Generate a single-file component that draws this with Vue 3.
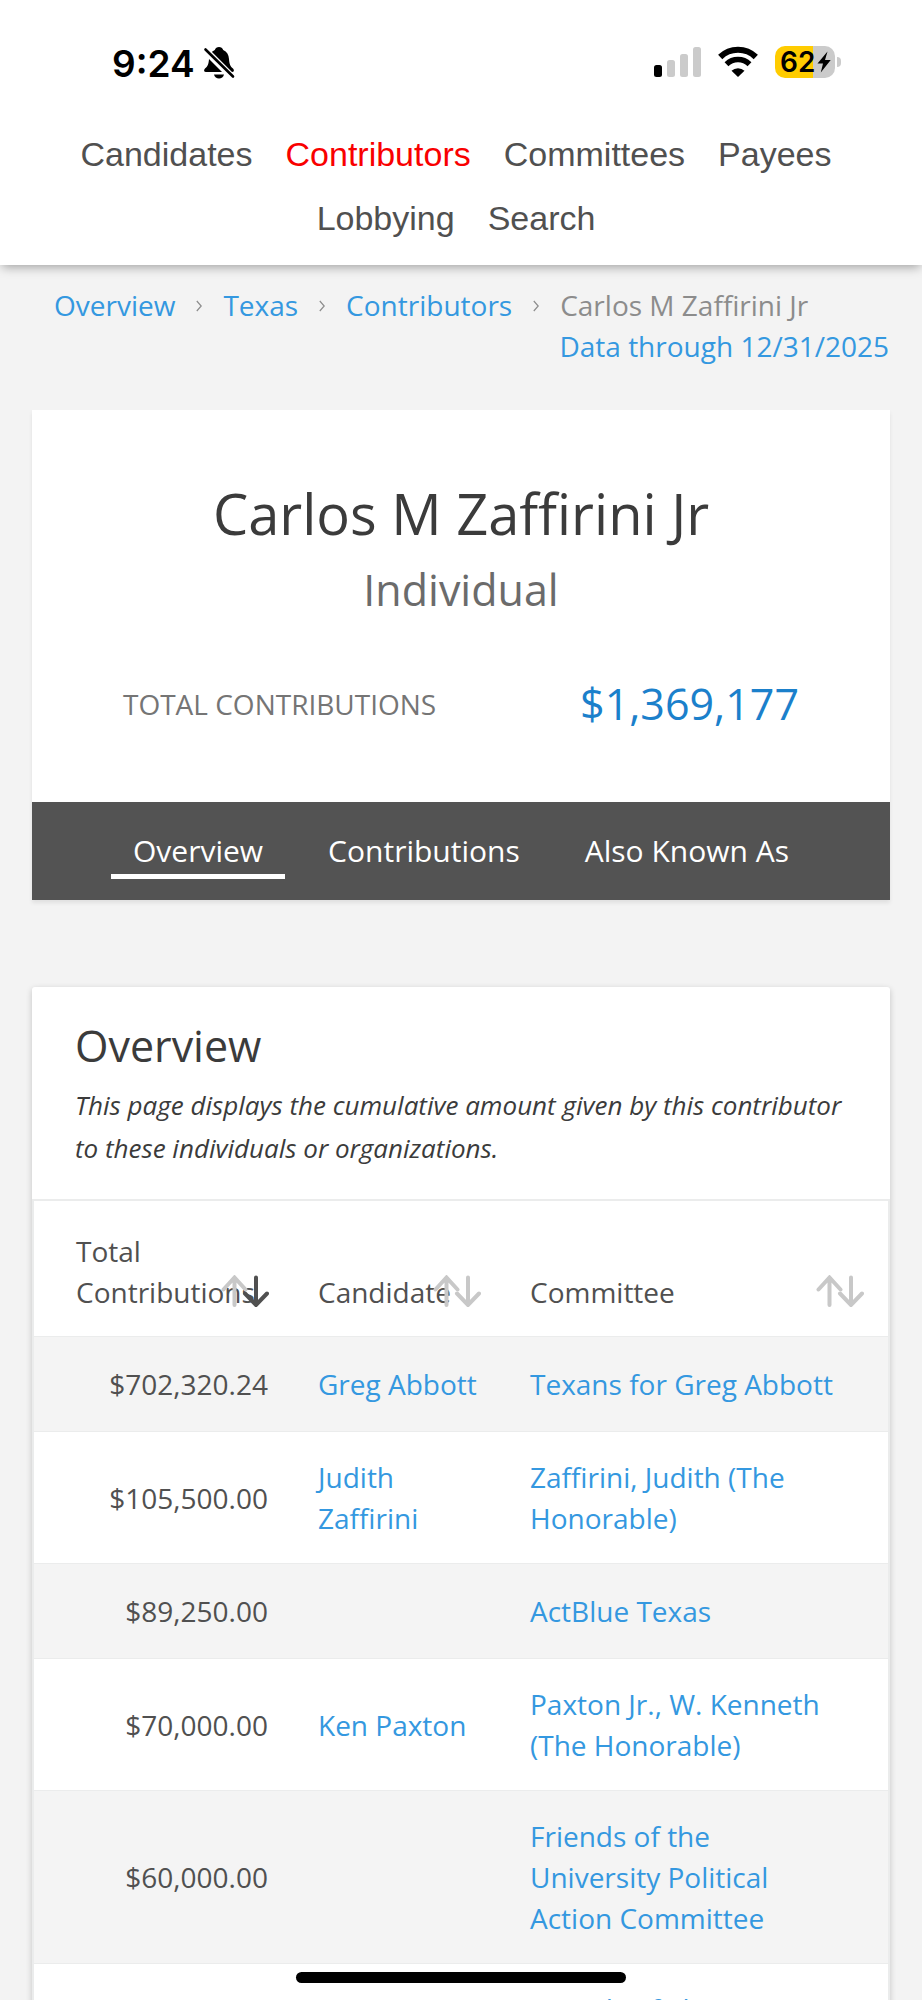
<script setup>
const navItems = [
  { label: 'Candidates' },
  { label: 'Contributors', active: true },
  { label: 'Committees' },
  { label: 'Payees' },
  { label: 'Lobbying' },
  { label: 'Search' }
]
const crumbs = ['Overview', 'Texas', 'Contributors']
const tabs = ['Overview', 'Contributions', 'Also Known As']
const columns = [
  { label: 'Total Contributions', sorted: true },
  { label: 'Candidate' },
  { label: 'Committee' }
]
const rows = [
  { amount: '$702,320.24', candidate: 'Greg Abbott', committee: 'Texans for Greg Abbott' },
  { amount: '$105,500.00', candidate: 'Judith Zaffirini', committee: 'Zaffirini, Judith (The Honorable)' },
  { amount: '$89,250.00', candidate: '', committee: 'ActBlue Texas' },
  { amount: '$70,000.00', candidate: 'Ken Paxton', committee: 'Paxton Jr., W. Kenneth (The Honorable)' },
  { amount: '$60,000.00', candidate: '', committee: 'Friends of the University Political Action Committee' },
  { amount: '', candidate: '', committee: 'Friends of The University' }
]
</script>

<template>
  <div class="screen">
    <header class="top">
      <div class="status">
        <div class="status-left">
          <span class="time">9:24</span>
          <svg class="bell" viewBox="0 0 32 34" width="32" height="34" aria-hidden="true">
            <path d="M16 1c-2 0-3.600 1.200-4.200 3C8 5.600 6.300 8.800 6 13c-.3 5-1.500 7.500-4 9.500C.5 24 .8 26 3 26h26c2.200 0 2.500-2 1-3.500-2.500-2-3.700-4.500-4-9.500-.3-4.200-2-7.400-5.800-9C19.600 2.200 18 1 16 1z" />
            <path d="M11 28.500h10c-.6 2.600-2.600 4-5 4s-4.400-1.400-5-4z" />
            <path d="M1 3l29 29" stroke="#fff" stroke-width="7" />
            <path d="M2.500 3.500L30 30.500" stroke="#000" stroke-width="2.600" stroke-linecap="round" />
          </svg>
        </div>
        <div class="status-right">
          <svg class="signal" viewBox="0 0 48 32" width="48" height="32" aria-hidden="true">
            <rect x="0" y="19" width="8" height="12" rx="2.500" />
            <rect x="13" y="14" width="8" height="17" rx="2.500" fill="#cbcbcb" />
            <rect x="26" y="8" width="8" height="23" rx="2.500" fill="#cbcbcb" />
            <rect x="39" y="1" width="8" height="30" rx="2.500" fill="#cbcbcb" />
          </svg>
          <svg class="wifi" viewBox="0 0 42 32" width="42" height="32" aria-hidden="true">
            <path d="M3.200 11a25.500 25.500 0 0 1 35.600 0" fill="none" stroke="#000" stroke-width="6" />
            <path d="M9.500 18.200a16.500 16.500 0 0 1 23 0" fill="none" stroke="#000" stroke-width="5.500" />
            <path d="M14.500 24.800a9.500 9.500 0 0 1 13 0L21 31z" />
          </svg>
          <div class="battery">
            <div class="cell">
              <span>62</span>
              <svg viewBox="0 0 14 22" width="14" height="22" aria-hidden="true">
                <path d="M10.500 .5L.5 12.500h5.500L3.800 21.500 13.700 9H8z" />
              </svg>
            </div>
            <div class="nub"></div>
          </div>
        </div>
      </div>
      <nav class="nav" aria-label="Main">
        <a v-for="n in navItems" :key="n.label" href="#" :class="{ active: n.active }">{{ n.label }}</a>
      </nav>
    </header>

    <div class="trail">
      <nav class="crumbs" aria-label="Breadcrumb">
        <template v-for="c in crumbs" :key="c">
          <a href="#">{{ c }}</a>
          <svg viewBox="0 0 6 12" width="6" height="12" aria-hidden="true">
            <path d="M.8 1L5.200 6 .8 11" fill="none" stroke="#8c8c8c" stroke-width="1.200" />
          </svg>
        </template>
        <span>Carlos M Zaffirini Jr</span>
      </nav>
      <a class="through" href="#">Data through 12/31/2025</a>
    </div>

    <main>
      <section class="profile">
        <div class="profile-body">
          <h1>Carlos M Zaffirini Jr</h1>
          <p class="kind">Individual</p>
          <dl class="total">
            <dt>TOTAL CONTRIBUTIONS</dt>
            <dd>$1,369,177</dd>
          </dl>
        </div>
        <nav class="tabs" aria-label="Contributor">
          <a v-for="(t, i) in tabs" :key="t" href="#" :class="{ active: i === 0 }">{{ t }}</a>
        </nav>
      </section>

      <section class="overview">
        <div class="intro">
          <h2>Overview</h2>
          <p>This page displays the cumulative amount given by this contributor to these individuals or organizations.</p>
        </div>
        <table>
          <colgroup>
            <col class="col-amount" />
            <col class="col-candidate" />
            <col />
          </colgroup>
          <thead>
            <tr>
              <th v-for="c in columns" :key="c.label" scope="col">
                <button type="button">
                  {{ c.label }}
                  <svg viewBox="0 0 48 32" width="48" height="32" aria-hidden="true">
                    <path class="arrow" d="M13.500 30V3M2.500 14.500L13.500 2.500 24.500 14.500" />
                    <path class="arrow" :class="{ on: c.sorted }" d="M35 2.500v27M24 18.500L35 30l11-11.500" />
                  </svg>
                </button>
              </th>
            </tr>
          </thead>
          <tbody>
            <tr v-for="(r, i) in rows" :key="i">
              <td class="amount">{{ r.amount }}</td>
              <td><a v-if="r.candidate" href="#">{{ r.candidate }}</a></td>
              <td class="committee"><a href="#">{{ r.committee }}</a></td>
            </tr>
          </tbody>
        </table>
      </section>
    </main>
    <div class="home"></div>
  </div>
</template>

<style>
body {
  margin: 0;
  background: #f3f3f3;
}
</style>

<style scoped>
.screen {
  position: relative;
  height: 100vh;
  overflow: hidden;
  background: #f3f3f3;
  font-family: "Open Sans", "Noto Sans", sans-serif;
  font-size: 28px;
  line-height: 41px;
  color: #505050;
}
a {
  color: #3498e0;
  text-decoration: none;
}
h1, h2, p, dl, dd {
  margin: 0;
  font-weight: 400;
}
.top {
  background: #fff;
  box-shadow: 0 4px 10px -2px rgba(0, 0, 0, 0.35);
  padding-bottom: 15px;
}
.status {
  display: flex;
  justify-content: space-between;
  align-items: center;
  height: 76px;
  padding: 24px 81px 22px 112px;
  font-family: Inter, sans-serif;
  color: #000;
}
.status-left, .status-right, .battery, .cell {
  display: flex;
  align-items: center;
}
.status-left {
  padding-top: 2px;
}
.time {
  font-size: 37px;
  font-weight: 600;
}
.bell {
  margin-left: 8px;
}
.wifi {
  margin: 0 16px 0 15px;
}
.cell {
  box-sizing: border-box;
  width: 60px;
  height: 32px;
  padding-left: 5px;
  border-radius: 10px;
  background: linear-gradient(to right, #ffcc00 38px, #cbcbcb 38px);
  font-size: 28px;
  font-weight: 600;
}
.cell svg {
  flex: none;
  margin-left: 2px;
}
.nub {
  width: 4px;
  height: 10px;
  margin-left: 2px;
  border-radius: 0 5px 5px 0;
  background: #cbcbcb;
}
.nav {
  display: flex;
  flex-wrap: wrap;
  justify-content: center;
  column-gap: 33px;
  padding: 0 70px 0 60px;
  font-family: "Liberation Sans", Arial, sans-serif;
  font-size: 34px;
  line-height: 64px;
}
.nav a {
  color: #505050;
}
.nav a.active {
  color: #f90000;
}
.trail {
  display: flex;
  flex-direction: column;
  padding: 20px 33px 43px 54px;
}
.crumbs {
  display: flex;
  align-items: center;
  gap: 21px;
  color: #8c8c8c;
}
.through {
  align-self: flex-end;
}
main {
  padding: 0 32px;
}
.profile {
  margin-bottom: 87px;
  box-shadow: 0 3px 4px rgba(0, 0, 0, 0.08);
}
.profile-body {
  padding: 65px 91px 69px;
  background: #fff;
  text-align: center;
}
h1 {
  font-size: 56px;
  line-height: 76px;
  color: #3b3b3b;
}
.kind {
  margin: 10px 0 56px;
  font-size: 43px;
  line-height: 58px;
  color: #6b6b6b;
}
.total {
  display: flex;
  justify-content: space-between;
  align-items: center;
  color: #757575;
}
.total dd {
  font-size: 43px;
  line-height: 58px;
  color: #1b80cb;
}
.tabs {
  display: flex;
  justify-content: center;
  gap: 21px;
  padding: 28px 0 21px;
  background: #535353;
  font-size: 30px;
}
.tabs a {
  padding: 0 22px 3px;
  border-bottom: 5px solid transparent;
  color: #fff;
}
.tabs a.active {
  border-color: #fff;
}
.overview {
  background: #fff;
  border-radius: 3px;
  box-shadow: 0 2px 6px rgba(0, 0, 0, 0.2);
}
.intro {
  padding: 30px 43px 29px;
  color: #3b3b3b;
}
h2 {
  margin-bottom: 9px;
  font-size: 43px;
  line-height: 58px;
}
.intro p {
  font-size: 26px;
  line-height: 43px;
  font-style: italic;
}
table {
  width: 100%;
  table-layout: fixed;
  border-collapse: separate;
  border-spacing: 0;
  border: 2px solid #ebecec;
}
.col-amount {
  width: 259px;
}
.col-candidate {
  width: 212px;
}
th {
  padding: 30px 25px 23px;
  vertical-align: bottom;
  text-align: left;
}
td {
  height: 95px;
  box-sizing: border-box;
  padding: 25px 25px 24px;
  border-top: 1px solid #ebecec;
}
.committee {
  padding-right: 44px;
}
th:first-child, td:first-child {
  padding-left: 42px;
}
tbody tr:nth-child(odd) {
  background: #f4f4f4;
}
.amount {
  text-align: right;
}
button {
  position: relative;
  display: block;
  width: 100%;
  padding: 0;
  border: 0;
  background: none;
  font: inherit;
  font-weight: 400;
  color: inherit;
  text-align: left;
}
button svg {
  position: absolute;
  right: -1px;
  bottom: 6px;
}
.arrow {
  fill: none;
  stroke: #c8c8c8;
  stroke-width: 4;
  stroke-linecap: round;
}
.arrow.on {
  stroke: #505050;
}
.home {
  position: absolute;
  bottom: 17px;
  left: 0;
  right: 0;
  width: 330px;
  height: 11px;
  margin: 0 auto;
  border-radius: 6px;
  background: #000;
}
</style>
